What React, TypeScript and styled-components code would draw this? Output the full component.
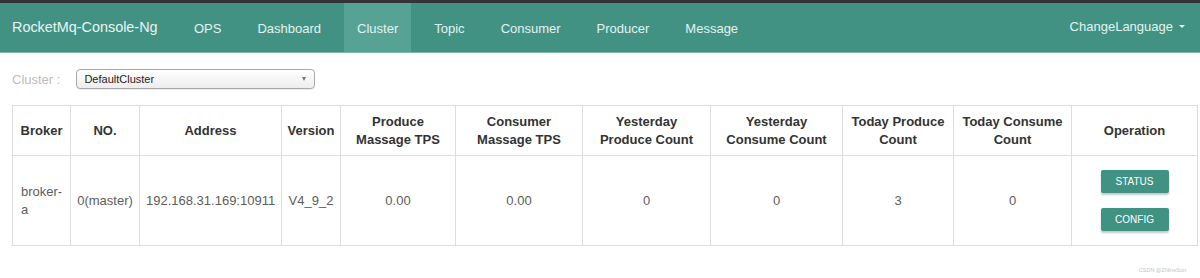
import React from 'react';
import styled, { createGlobalStyle } from 'styled-components';

const GlobalStyle = createGlobalStyle`
  html, body {
    margin: 0;
    padding: 0;
    background: #fff;
    font-family: "Liberation Sans", Arial, sans-serif;
  }
`;

const NavBar = styled.nav`
  display: flex;
  align-items: stretch;
  height: 49px;
  background: #429284;
  border-top: 3px solid #343434;
  border-bottom: 1px solid #7db6ad;
  color: #e3f3ef;
`;

const Brand = styled.div`
  display: flex;
  align-items: center;
  box-sizing: border-box;
  width: 181px;
  padding: 0 0 2px 12px;
  font-size: 14.4px;
  color: #e8f5f2;
`;

const NavList = styled.ul`
  display: flex;
  gap: 10px;
  margin: 0;
  padding: 0;
  list-style: none;
`;

const NavItem = styled.li<{ $active?: boolean }>`
  display: flex;
  align-items: center;
  padding: 1px 13px 0;
  font-size: 13px;
  background: ${(p) => (p.$active ? '#56a295' : 'transparent')};
`;

const LangMenu = styled.div`
  display: flex;
  align-items: center;
  gap: 6px;
  margin-left: auto;
  padding: 0 15px 2px 0;
  font-size: 13px;
`;

const Caret = styled.span`
  width: 0;
  height: 0;
  border-left: 3.5px solid transparent;
  border-right: 3.5px solid transparent;
  border-top: 3.5px solid #e3f3ef;
`;

const Content = styled.main`
  padding: 16px 3px 0 12px;
`;

const FilterRow = styled.div`
  display: flex;
  align-items: center;
  gap: 16px;
  height: 20px;
`;

const FilterLabel = styled.span`
  font-size: 13px;
  color: #bdbdbd;
`;

const FakeSelect = styled.div`
  display: flex;
  align-items: center;
  justify-content: space-between;
  box-sizing: border-box;
  width: 239px;
  height: 20px;
  padding: 0 8px 0 7px;
  border: 1px solid #a8a8a8;
  border-radius: 4px;
  background: linear-gradient(#ffffff, #ededed);
  box-shadow: 0 1px 1px rgba(0, 0, 0, 0.08);
  font-size: 11px;
  color: #222;
`;

const SelectArrow = styled.span`
  width: 0;
  height: 0;
  border-left: 2.5px solid transparent;
  border-right: 2.5px solid transparent;
  border-top: 4px solid #777;
`;

const Table = styled.table`
  width: 1185px;
  margin-top: 16px;
  border-collapse: collapse;
  table-layout: fixed;
  border: 1px solid #dddddd;
`;

const HeadCell = styled.th`
  height: 37px;
  padding: 6px 4px;
  border: 1px solid #dddddd;
  font-size: 13px;
  line-height: 18px;
  font-weight: bold;
  color: #333;
  text-align: center;
  vertical-align: middle;
  white-space: pre-line;
`;

const BodyCell = styled.td<{ $left?: boolean }>`
  padding: 14px 6px 14px ${(p) => (p.$left ? '8px' : '6px')};
  border: 1px solid #dddddd;
  font-size: 13px;
  line-height: 18px;
  color: #5c5c5c;
  text-align: ${(p) => (p.$left ? 'left' : 'center')};
  vertical-align: middle;
`;

const ButtonStack = styled.div`
  display: flex;
  flex-direction: column;
  align-items: center;
  gap: 15px;
`;

const ActionButton = styled.button`
  width: 68px;
  height: 23px;
  padding: 0;
  border: none;
  border-radius: 2px;
  background: #409283;
  box-shadow: 0 2px 2px rgba(0, 0, 0, 0.22);
  font-family: "Liberation Sans", Arial, sans-serif;
  font-size: 10px;
  color: #fff;
  text-transform: uppercase;
`;

const Watermark = styled.div`
  margin-top: 21px;
  padding-right: 11px;
  text-align: right;
  font-size: 5.5px;
  color: #c4c4c4;
`;

const navItems = ['OPS', 'Dashboard', 'Cluster', 'Topic', 'Consumer', 'Producer', 'Message'];

const columns = [
  { title: 'Broker', width: 58 },
  { title: 'NO.', width: 69 },
  { title: 'Address', width: 142 },
  { title: 'Version', width: 59 },
  { title: 'Produce\nMassage TPS', width: 115 },
  { title: 'Consumer\nMassage TPS', width: 127 },
  { title: 'Yesterday\nProduce Count', width: 128 },
  { title: 'Yesterday\nConsume Count', width: 132 },
  { title: 'Today Produce\nCount', width: 111 },
  { title: 'Today Consume\nCount', width: 118 },
  { title: 'Operation', width: 126 },
];

const brokerRow = ['broker-a', '0(master)', '192.168.31.169:10911', 'V4_9_2', '0.00', '0.00', '0', '0', '3', '0'];

const App = () => {
  return (
    <>
      <GlobalStyle />
      <NavBar>
        <Brand>RocketMq-Console-Ng</Brand>
        <NavList>
          {navItems.map((item) => (
            <NavItem key={item} $active={item === 'Cluster'}>
              {item}
            </NavItem>
          ))}
        </NavList>
        <LangMenu>
          ChangeLanguage
          <Caret />
        </LangMenu>
      </NavBar>

      <Content>
        <FilterRow>
          <FilterLabel>Cluster :</FilterLabel>
          <FakeSelect>
            DefaultCluster
            <SelectArrow />
          </FakeSelect>
        </FilterRow>

        <Table>
          <colgroup>
            {columns.map((c) => (
              <col key={c.title} style={{ width: c.width }} />
            ))}
          </colgroup>
          <thead>
            <tr>
              {columns.map((c) => (
                <HeadCell key={c.title}>{c.title}</HeadCell>
              ))}
            </tr>
          </thead>
          <tbody>
            <tr>
              {brokerRow.map((value, i) => (
                <BodyCell key={i} $left={i === 0}>
                  {value}
                </BodyCell>
              ))}
              <BodyCell>
                <ButtonStack>
                  <ActionButton>Status</ActionButton>
                  <ActionButton>Config</ActionButton>
                </ButtonStack>
              </BodyCell>
            </tr>
          </tbody>
        </Table>

        <Watermark>CSDN @ZNineSun</Watermark>
      </Content>
    </>
  );
};

export default App;
